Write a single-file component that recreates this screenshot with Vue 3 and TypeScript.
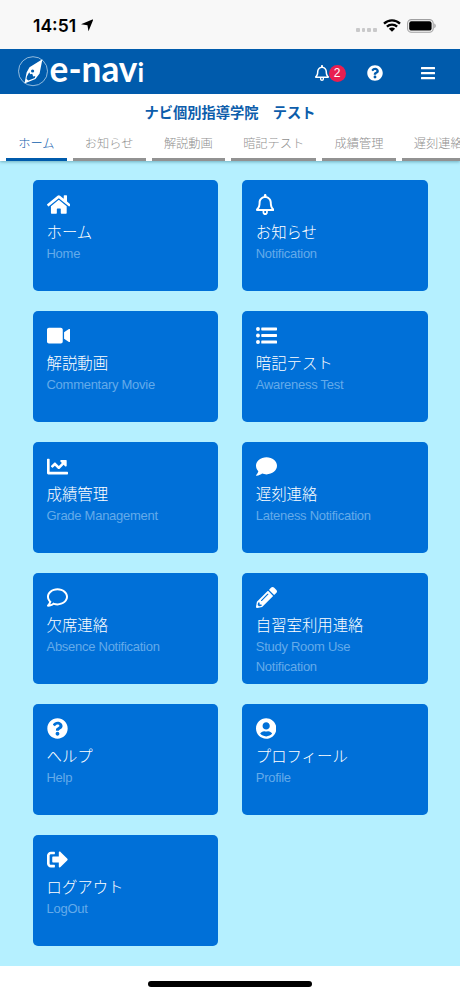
<script setup lang="ts">
interface Icon {
  w: number
  d: string
}

interface Card {
  icon: string
  title: string
  sub: string
}

const icons: Record<string, Icon> = {
  home: { w: 576, d: 'M280.37 148.26L96 300.11V464a16 16 0 0 0 16 16l112.06-.29a16 16 0 0 0 15.92-16V368a16 16 0 0 1 16-16h64a16 16 0 0 1 16 16v95.64a16 16 0 0 0 16 16.05L464 480a16 16 0 0 0 16-16V300L295.67 148.26a12.19 12.19 0 0 0-15.3 0zM571.6 251.47L488 182.56V44.05a12 12 0 0 0-12-12h-56a12 12 0 0 0-12 12v72.61L318.47 43a48 48 0 0 0-61 0L4.34 251.47a12 12 0 0 0-1.6 16.9l25.5 31A12 12 0 0 0 45.15 301l235.22-193.74a12.19 12.19 0 0 1 15.3 0L530.9 301a12 12 0 0 0 16.9-1.6l25.5-31a12 12 0 0 0-1.7-16.93z' },
  bell: { w: 448, d: 'M439.39 362.29c-19.32-20.76-55.47-51.99-55.47-154.29 0-77.7-54.48-139.9-127.94-155.16V32c0-17.67-14.32-32-31.98-32s-31.98 14.33-31.98 32v20.84C118.56 68.1 64.08 130.3 64.08 208c0 102.3-36.15 133.53-55.47 154.29-6 6.45-8.66 14.16-8.61 21.71.11 16.4 12.98 32 32.1 32h383.8c19.12 0 32-15.6 32.1-32 .05-7.55-2.61-15.27-8.61-21.71zM67.53 368c21.22-27.97 44.42-74.33 44.53-159.42 0-.2-.06-.38-.06-.58 0-61.86 50.14-112 112-112s112 50.14 112 112c0 .2-.06.38-.06.58.11 85.1 23.31 131.46 44.53 159.42H67.53zM224 512c35.32 0 63.97-28.65 63.97-64V416H160.03v32c0 35.35 28.65 64 63.97 64zM202 416v28a22 22 0 0 0 44 0v-28z' },
  video: { w: 576, d: 'M336.2 64H47.8C21.4 64 0 85.4 0 111.8v288.4C0 426.6 21.4 448 47.8 448h288.4c26.4 0 47.8-21.4 47.8-47.8V111.8c0-26.4-21.4-47.8-47.8-47.8zm189.4 37.7L416 177.3v157.4l109.6 75.5c21.2 14.6 50.4-.3 50.4-25.8V127.5c0-25.4-29.1-40.4-50.4-25.8z' },
  list: { w: 512, d: 'M96 96a48 48 0 1 1-96 0 48 48 0 0 1 96 0zM96 256a48 48 0 1 1-96 0 48 48 0 0 1 96 0zM96 416a48 48 0 1 1-96 0 48 48 0 0 1 96 0zM144 132h352a16 16 0 0 0 16-16V76a16 16 0 0 0-16-16H144a16 16 0 0 0-16 16v40a16 16 0 0 0 16 16zM144 292h352a16 16 0 0 0 16-16v-40a16 16 0 0 0-16-16H144a16 16 0 0 0-16 16v40a16 16 0 0 0 16 16zM144 452h352a16 16 0 0 0 16-16v-40a16 16 0 0 0-16-16H144a16 16 0 0 0-16 16v40a16 16 0 0 0 16 16z' },
  chart: { w: 512, d: 'M496 384H64V80c0-8.84-7.16-16-16-16H16C7.16 64 0 71.16 0 80v336c0 17.67 14.33 32 32 32h464c8.84 0 16-7.16 16-16v-32c0-8.84-7.16-16-16-16zM464 96H345.94c-21.38 0-32.09 25.85-16.97 40.97l32.4 32.4L288 242.75l-73.37-73.37c-12.5-12.5-32.76-12.5-45.25 0l-68.69 68.69c-6.25 6.25-6.25 16.38 0 22.63l22.62 22.62c6.25 6.25 16.38 6.25 22.63 0L192 237.25l73.37 73.37c12.5 12.5 32.76 12.5 45.25 0l96-96 32.4 32.4c15.12 15.12 40.97 4.41 40.97-16.97V112c.01-8.84-7.15-16-15.99-16z' },
  comment: { w: 512, d: 'M256 32C114.6 32 0 125.1 0 240c0 49.6 21.4 95 57 130.7C44.5 421.1 2.7 466 2.2 466.5c-2.2 2.3-2.8 5.7-1.5 8.7S4.8 480 8 480c66.3 0 116-31.8 140.6-51.4 32.7 12.3 69 19.4 107.4 19.4 141.4 0 256-93.1 256-208S397.4 32 256 32z' },
  commentOutline: { w: 512, d: 'M256 32C114.6 32 0 125.1 0 240c0 47.6 19.9 91.2 52.9 126.3C38 405.7 7 439.1 6.5 439.5c-6.6 7-8.4 17.2-4.6 26S14.4 480 24 480c61.5 0 110-25.7 139.1-46.3C192 442.8 223.2 448 256 448c141.4 0 256-93.1 256-208S397.4 32 256 32zm0 368c-26.7 0-53.1-4.1-78.4-12.1l-22.7-7.2-19.5 13.8c-14.3 10.1-33.9 21.4-57.5 29 7.3-12.1 14.4-25.7 19.9-40.2l10.6-28.1-20.6-21.8C69.7 314.1 48 282.2 48 240c0-88.2 93.3-160 208-160s208 71.8 208 160-93.3 160-208 160z' },
  pencil: { w: 512, d: 'M497.9 142.1l-46.1 46.1c-4.7 4.7-12.3 4.7-17 0l-111-111c-4.7-4.7-4.7-12.3 0-17l46.1-46.1c18.7-18.7 49.1-18.7 67.9 0l60.1 60.1c18.8 18.7 18.8 49.1 0 67.9zM284.2 99.8L21.6 362.4.4 483.9c-2.9 16.4 11.4 30.6 27.8 27.8l121.5-21.3 262.6-262.6c4.7-4.7 4.7-12.3 0-17l-111-111c-4.8-4.7-12.4-4.7-17.1 0zM124.1 339.9c-5.5-5.5-5.5-14.3 0-19.8l154-154c5.5-5.5 14.3-5.5 19.8 0s5.5 14.3 0 19.8l-154 154c-5.5 5.5-14.3 5.5-19.8 0zM88 424h48v36.3l-64.5 11.3-31.1-31.1L51.7 376H88v48z' },
  help: { w: 512, d: 'M504 256c0 136.997-111.043 248-248 248S8 392.997 8 256C8 119.083 119.043 8 256 8s248 111.083 248 248zM262.655 90c-54.497 0-89.255 22.957-116.549 63.758-3.536 5.286-2.353 12.415 2.715 16.258l34.699 26.31c5.205 3.947 12.621 3.008 16.665-2.122 17.864-22.658 30.113-35.797 57.303-35.797 20.429 0 45.698 13.148 45.698 32.958 0 14.976-12.363 22.667-32.534 33.976C247.128 238.528 216 254.941 216 296v4c0 6.627 5.373 12 12 12h56c6.627 0 12-5.373 12-12v-1.333c0-28.462 83.186-29.647 83.186-106.667 0-58.002-60.165-102-116.531-102zM256 338c-25.365 0-46 20.635-46 46 0 25.364 20.635 46 46 46s46-20.636 46-46c0-25.365-20.635-46-46-46z' },
  user: { w: 496, d: 'M248 8C111 8 0 119 0 256s111 248 248 248 248-111 248-248S385 8 248 8zm0 96c48.6 0 88 39.4 88 88s-39.4 88-88 88-88-39.4-88-88 39.4-88 88-88zm0 344c-58.7 0-111.3-26.6-146.5-68.2 18.8-35.4 55.6-59.8 98.5-59.8 2.4 0 4.8.4 7.1 1.1 13 4.2 26.6 6.9 40.9 6.9 14.3 0 28-2.7 40.9-6.9 2.3-.7 4.7-1.1 7.1-1.1 42.9 0 79.7 24.4 98.5 59.8C359.3 421.4 306.7 448 248 448z' },
  logout: { w: 512, d: 'M497 273L329 441c-15 15-41 4.5-41-17v-96H152c-13.3 0-24-10.7-24-24v-96c0-13.3 10.7-24 24-24h136V88c0-21.4 25.9-32 41-17l168 168c9.3 9.4 9.3 24.6 0 34zM192 436v-40c0-6.6-5.4-12-12-12H96c-17.7 0-32-14.3-32-32V160c0-17.7 14.3-32 32-32h84c6.6 0 12-5.4 12-12V76c0-6.6-5.4-12-12-12H96c-53 0-96 43-96 96v192c0 53 43 96 96 96h84c6.6 0 12-5.4 12-12z' },
  bars: { w: 448, d: 'M16 132h416a16 16 0 0 0 16-16V76a16 16 0 0 0-16-16H16A16 16 0 0 0 0 76v40a16 16 0 0 0 16 16zM16 292h416a16 16 0 0 0 16-16v-40a16 16 0 0 0-16-16H16a16 16 0 0 0-16 16v40a16 16 0 0 0 16 16zM16 452h416a16 16 0 0 0 16-16v-40a16 16 0 0 0-16-16H16a16 16 0 0 0-16 16v40a16 16 0 0 0 16 16z' },
}

const tabs: string[] = ['ホーム', 'お知らせ', '解説動画', '暗記テスト', '成績管理', '遅刻連絡']

const cards: Card[] = [
  { icon: 'home', title: 'ホーム', sub: 'Home' },
  { icon: 'bell', title: 'お知らせ', sub: 'Notification' },
  { icon: 'video', title: '解説動画', sub: 'Commentary Movie' },
  { icon: 'list', title: '暗記テスト', sub: 'Awareness Test' },
  { icon: 'chart', title: '成績管理', sub: 'Grade Management' },
  { icon: 'comment', title: '遅刻連絡', sub: 'Lateness Notification' },
  { icon: 'commentOutline', title: '欠席連絡', sub: 'Absence Notification' },
  { icon: 'pencil', title: '自習室利用連絡', sub: 'Study Room Use Notification' },
  { icon: 'help', title: 'ヘルプ', sub: 'Help' },
  { icon: 'user', title: 'プロフィール', sub: 'Profile' },
  { icon: 'logout', title: 'ログアウト', sub: 'LogOut' },
]
</script>

<template>
  <div class="screen">
    <div class="status">
      <div class="clock">
        <span>14:51</span>
        <svg class="locate" viewBox="0 0 12 12"><path d="M12 0L7.2 11.7 6.2 6.1 0 5.1z" /></svg>
      </div>
      <div class="indicators">
        <div class="dots"><i v-for="n in 4" :key="n"></i></div>
        <svg class="wifi" viewBox="0 0 18 13">
          <path class="arc" d="M1 4.6a11.6 11.6 0 0 1 16 0M3.9 7.7a7.4 7.4 0 0 1 10.2 0" />
          <path d="M9 12.8L5.9 9.7a4.4 4.4 0 0 1 6.2 0z" />
        </svg>
        <svg class="battery" viewBox="0 0 30 14">
          <rect x=".6" y=".6" width="25.6" height="12.6" rx="3.8" class="shell" />
          <rect x="2.2" y="2.2" width="22.4" height="9.4" rx="2.2" />
          <path class="cap" d="M27.3 4.6c1.9.7 1.9 3.9 0 4.6z" />
        </svg>
      </div>
    </div>

    <header class="bar">
      <svg class="logo" viewBox="0 0 130 44.5">
        <circle class="ring" cx="15" cy="22.2" r="14.5" />
        <path class="needle" fill-rule="evenodd" d="M24.4 10.2L11.5 18.2 8.6 23.4 6.5 34.4 17.4 30.1 21.6 24.6zM8.9 27.4L11.2 23.3 12.3 25.3 14.2 24.7 15.2 27.4 17.3 26.9 16.8 28.9 10.4 31.5 8.5 30z" />
        <circle class="hub" cx="14.6" cy="22" r="1.6" />
        <text x="31.6" y="33" textLength="94.5" lengthAdjust="spacingAndGlyphs" class="word">e-nav<tspan class="small">i</tspan></text>
      </svg>
      <div class="actions">
        <div class="notice">
          <svg class="bell" viewBox="0 0 448 512"><path fill-rule="evenodd" :d="icons.bell.d" /></svg>
          <span class="badge">2</span>
        </div>
        <svg class="help" viewBox="0 0 512 512"><path fill-rule="evenodd" :d="icons.help.d" /></svg>
        <svg class="menu" viewBox="0 0 448 512"><path :d="icons.bars.d" /></svg>
      </div>
    </header>

    <h1 class="school">ナビ個別指導学院　テスト</h1>

    <nav class="tabs">
      <a v-for="(tab, i) in tabs" :key="tab" class="tab" :class="{ active: i === 0 }">{{ tab }}</a>
    </nav>

    <main class="grid">
      <section v-for="card in cards" :key="card.title" class="card">
        <svg class="icon" :viewBox="`0 0 ${icons[card.icon].w} 512`">
          <path fill-rule="evenodd" :d="icons[card.icon].d" />
        </svg>
        <h2>{{ card.title }}</h2>
        <p>{{ card.sub }}</p>
      </section>
    </main>

    <footer class="foot"><div class="pill"></div></footer>
  </div>
</template>

<style>
body {
  margin: 0;
  overflow: hidden;
}
</style>

<style scoped>
.screen {
  width: 460px;
  height: 996px;
  display: flex;
  flex-direction: column;
  overflow: hidden;
  background: #fff;
  font-family: "Liberation Sans", "Noto Sans CJK JP", sans-serif;
}
.status {
  height: 49px;
  flex: none;
  box-sizing: border-box;
  padding: 2px 23.5px 0 33px;
  display: flex;
  align-items: center;
  justify-content: space-between;
  background: #f8f8f8;
}
.clock {
  display: flex;
  align-items: center;
  gap: 4.5px;
  font: 600 17.5px/20px Inter, sans-serif;
}
.locate {
  width: 12.5px;
  height: 12.5px;
}
.indicators {
  display: flex;
  align-items: center;
}
.dots {
  display: flex;
  gap: 2px;
  padding-top: 9px;
  margin-right: 6px;
}
.dots i {
  width: 3.6px;
  height: 3.6px;
  border-radius: 1px;
  background: #c9c9ca;
}
.wifi {
  width: 18px;
  height: 13px;
  margin-right: 6px;
}
.arc {
  fill: none;
  stroke: #000;
  stroke-width: 2.3;
}
.battery {
  width: 30px;
  height: 14px;
}
.shell {
  fill: none;
  stroke: #a0a0a1;
  stroke-width: 1.1;
}
.cap {
  fill: #a0a0a1;
}
.bar {
  height: 44.5px;
  flex: none;
  box-sizing: border-box;
  padding: 0 25px 0 17.5px;
  display: flex;
  align-items: center;
  justify-content: space-between;
  background: #005bac;
}
.logo {
  width: 130px;
  height: 44.5px;
  overflow: visible;
}
.ring {
  fill: none;
  stroke: #b8d3ea;
  stroke-width: 0.8;
}
.needle {
  fill: #fff;
}
.hub {
  fill: #005bac;
}
.word {
  font: 700 36.5px Lato, sans-serif;
  fill: #fff;
}
.small {
  font-size: 27px;
}
.actions {
  display: flex;
  align-items: center;
  padding-top: 4px;
}
.actions svg {
  fill: #fff;
}
.notice {
  display: flex;
  align-items: center;
  margin-right: 21.5px;
}
.bell {
  width: 14px;
  height: 16px;
}
.badge {
  width: 17px;
  height: 17px;
  margin-top: 1px;
  border-radius: 50%;
  background: #e91e50;
  color: #fff;
  font-size: 12px;
  line-height: 17px;
  text-align: center;
}
.help {
  width: 16px;
  height: 16px;
  margin-right: 38px;
}
.menu {
  width: 14px;
  height: 16px;
}
.school {
  flex: none;
  height: 36px;
  margin: 0;
  text-align: center;
  font: 700 14.25px/36px "Noto Sans CJK JP", sans-serif;
  color: #0c5dab;
  background: #fff;
  z-index: 2;
}
.tabs {
  flex: none;
  height: 31px;
  padding-left: 6px;
  display: flex;
  gap: 6px;
  overflow: hidden;
  background: #fff;
  box-shadow: 0 1px 3px rgba(40, 110, 130, 0.5);
  z-index: 1;
}
.tab {
  flex: none;
  box-sizing: border-box;
  height: 31px;
  padding: 0 12.2px;
  border-bottom: 3.5px solid #929292;
  color: #909090;
  font: 300 12.22px/27.5px "Noto Sans CJK JP", sans-serif;
}
.active {
  color: #0f60ae;
  border-color: #005bac;
}
.grid {
  flex: none;
  height: 805.5px;
  box-sizing: border-box;
  padding: 19.1px 32.5px 20px;
  display: grid;
  grid-template-columns: 1fr 1fr;
  grid-auto-rows: 111px;
  gap: 20.1px 23.5px;
  align-content: start;
  background: #b5f0ff;
}
.card {
  box-sizing: border-box;
  padding: 14px;
  border-radius: 5px;
  background: #0070d8;
  overflow: hidden;
}
.icon {
  display: block;
  height: 21px;
  fill: #fff;
}
h2 {
  margin: 4.4px 0 0.6px;
  font: 300 15.4px/24px "Noto Sans CJK JP", sans-serif;
  color: #fff;
  white-space: nowrap;
}
p {
  margin: 0;
  font-size: 13px;
  letter-spacing: -0.27px;
  line-height: 20px;
  color: #64abea;
}
.foot {
  flex: 1;
  display: flex;
  justify-content: center;
  align-items: flex-start;
  padding-top: 15px;
}
.pill {
  width: 164px;
  height: 6px;
  border-radius: 3px;
  background: #000;
}
</style>
